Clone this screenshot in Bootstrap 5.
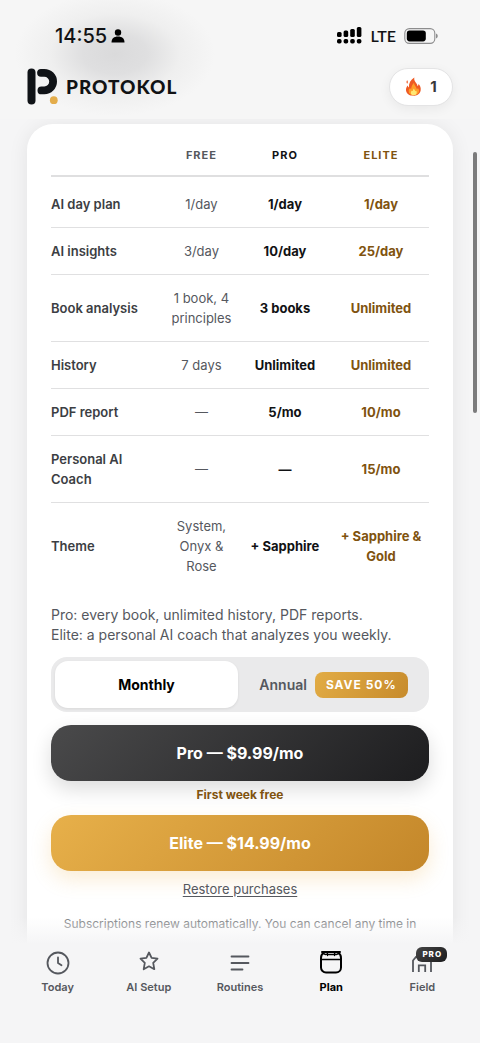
<!DOCTYPE html>
<html lang="en">
<head>
<meta charset="utf-8">
<meta name="viewport" content="width=device-width, initial-scale=1">
<title>Protokol – Plan</title>
<link href="https://cdn.jsdelivr.net/npm/bootstrap@5.3.0/dist/css/bootstrap.min.css" rel="stylesheet">
<style>
:root{--ink:#111214;--dim:#55585e;--gold:#80530f;--page:#f5f5f6}
body{font-family:Inter,"Liberation Sans",sans-serif;background:var(--page);color:var(--ink);font-size:13px;line-height:20px}
.app-top{background:radial-gradient(ellipse 100px 62px at 115px 54px,#dadadb 0,#dfdfe0 32%,rgba(236,236,236,.7) 65%,rgba(245,245,246,0) 100%),#f6f6f6}
.status{height:64px;padding:7px 42px 0 55px}
.clock{font-size:20px;font-weight:500}
.lte{font-family:Lato,sans-serif;font-size:16px;font-weight:600}
.brandbar{height:55px;padding:0 27px 10px}
.wordmark{font-family:Lato,Inter,sans-serif;font-weight:900;font-size:19px;letter-spacing:1px}
.streak{background:#fff;border:1px solid #e4e4e5;height:38px;width:64px;font-size:15px;font-weight:700;color:#37383b;box-shadow:0 3px 12px rgba(0,0,0,.06)}
.scroller{padding:5px 27px 0}
.sheet{background:#fff;border-radius:26px;padding:21px 24px 160px;box-shadow:0 2px 20px rgba(0,0,0,.08)}
.plans{table-layout:fixed;border-collapse:collapse}
.plans th,.plans td{padding:13px 5px;text-align:center;vertical-align:middle;border-bottom:1px solid #e0e0e1}
.plans tbody th{padding-left:0;text-align:left;font-weight:600;color:#3c3e43}
.plans thead>tr>*{padding:0 0 10px;border-bottom:2px solid #dfdfe0;font-size:11px;font-weight:700;letter-spacing:1px}
.plans tbody tr:first-child>*{padding-top:17px}
.plans tbody tr:last-child>*{border-bottom:0}
.plans .c-free{color:var(--dim)}
.plans td.c-pro,.plans td.c-elite{font-weight:700}
.c-elite,.trial{color:var(--gold)}
.col-name{width:30.4%}.col-free{width:18.8%}.col-paid{width:25.4%}
.pitch{font-size:14px;color:var(--dim);margin:16px 0 12px}
.switcher{background:#eaeaeb;border-radius:16px;padding:4px;margin-bottom:13px}
.switcher label{height:47px;border-radius:13px;font-size:14px;font-weight:600;color:var(--dim);cursor:pointer}
.switcher .btn-check:checked+label{background:#fff;color:#000;font-weight:700;box-shadow:0 1px 3px rgba(0,0,0,.08)}
.save{background:linear-gradient(120deg,#e2ac45,#c78b2c);color:#fff;border-radius:8px;font-size:12px;font-weight:700;letter-spacing:1px;line-height:26px;padding:0 11px}
.buy{height:56px;border:0;border-radius:20px;color:#fff;font-size:16px;font-weight:700}
.buy-pro{background:linear-gradient(135deg,#4a4a4b,#1d1d1f);box-shadow:0 8px 20px rgba(0,0,0,.14)}
.buy-elite{background:linear-gradient(135deg,#e7b04a,#c4872a);box-shadow:0 8px 20px rgba(230,170,60,.22)}
.trial{font-size:12px;font-weight:700;line-height:28px;padding-bottom:6px}
.restore{color:var(--dim);text-underline-offset:2px}
.restore:hover{color:#000}
.terms{color:#7b7d81;font-size:12px;margin-top:15px}
.tabs{background:linear-gradient(rgba(245,245,246,0),var(--page) 27px);padding:34px 12px 48px}
.tabs a{color:var(--dim);font-size:11px;font-weight:600;line-height:16px}
.tabs a.active{color:#000;font-weight:700}
.tabs svg{margin-bottom:4px}
.tab-pill{left:calc(50% - 6px);top:-4px;background:linear-gradient(135deg,#444,#1c1c1e);color:#fff;font-size:8px;font-weight:800;letter-spacing:1px;line-height:15px;padding:0 5px 0 6px;border-radius:6px}
.thumb{right:3px;top:152px;width:4px;height:25vh;background:#7b7b7c;border-radius:2px}
</style>
</head>
<body>
<div class="vh-100 d-flex flex-column overflow-hidden position-relative">
  <header class="app-top flex-shrink-0">
    <div class="status d-flex align-items-center justify-content-between">
      <div class="d-flex align-items-center gap-1">
        <span class="clock">14:55</span>
        <svg width="14" height="14" viewBox="0 0 14 14" aria-hidden="true"><circle cx="7" cy="3.5" r="3.2"/><path d="M.5 13.6c0-4 2.5-6 6.500-6s6.500 2 6.500 6z"/></svg>
      </div>
      <div class="d-flex align-items-center gap-2">
        <svg width="25" height="17" viewBox="0 0 25 17" aria-hidden="true"><g><rect x="0" y="5" width="4.600" height="5" rx="1.500"/><rect x="6.600" y="3.500" width="4.600" height="6.500" rx="1.500"/><rect x="13.200" y="2" width="4.600" height="8" rx="1.500"/><rect x="19.800" y="0" width="4.600" height="10" rx="1.500"/><rect x="0" y="12" width="4.600" height="4.500" rx="1.800"/><rect x="6.600" y="12" width="4.600" height="4.500" rx="1.800"/><rect x="13.200" y="12" width="4.600" height="4.500" rx="1.800"/><rect x="19.800" y="12" width="4.600" height="4.500" rx="1.800"/></g></svg>
        <span class="lte">LTE</span>
        <svg width="34" height="16" viewBox="0 0 34 16" aria-hidden="true"><rect x=".8" y=".6" width="30" height="14.800" rx="4.600" fill="none" stroke="#8d8d8e" stroke-width="1.100"/><rect x="2.800" y="2.600" width="19" height="10.800" rx="2.800"/><path d="M32 5.500q1.800.6 1.800 2.500T32 10.500z" fill="#8d8d8e"/></svg>
      </div>
    </div>
    <div class="brandbar d-flex align-items-center justify-content-between">
      <div class="d-flex align-items-center gap-2">
        <svg width="31" height="37" viewBox="0 0 31 37" aria-hidden="true"><g fill="none" stroke="#101317" stroke-linecap="round"><path d="M4.500 4.500v28" stroke-width="8"/><path d="M14 4.800h3.300a8.800 8.800 0 0 1 0 17.600H14.400" stroke-width="7.800"/></g><circle cx="26.800" cy="32.200" r="3.900" fill="#e4ad4b"/></svg>
        <span class="wordmark">PROTOKOL</span>
      </div>
      <button type="button" class="streak rounded-pill p-0 d-flex align-items-center justify-content-center gap-2" aria-label="Streak: 1">
        <svg width="17" height="19" viewBox="0 0 17 19" aria-hidden="true"><path d="M7.200 18.600C2.800 18.200.8 15.500 1 12.200c.1-1.700.9-2.800 1.700-3.800.2 1 .6 1.600 1.200 2C3.700 6.500 5.500 2.800 9.300.5c-.5 2.500.8 4 2 5.700.7 1 1.200 2 1.300 3.100.6-.6.900-1.300.9-2.300 1.700 1.700 2.500 3.700 2.200 6-.4 3.300-2.900 5.700-6.500 5.700z" fill="#ee5a24"/><path d="M2.100 3.200c1 1.100 1 2.200.2 3.500C1.200 5.600 1.300 4.400 2.100 3.200z" fill="#ee5a24"/><path d="M8 18.300c-2.900-.2-4.500-2-4.300-4.500.1-1.300.8-2.100 1.500-2.700.2.700.5 1 .9 1.200.2-2.500 1.100-4.800 2.900-6.500 0 2.600 2.400 3.700 2.900 6.500.5-.3.800-.7 1-1.300 1 1.200 1.400 2.300 1 3.800-.5 2.200-2.400 3.500-5.900 3.500z" fill="#ff9d28"/><path d="M8.500 18.300c-1.700-.1-2.700-1.200-2.600-2.600 0-1 .6-1.600 1.100-2.100.3.400.5.500.8.500.1-1 .5-1.900 1.200-2.500.2 1.300 1.100 1.700 1.400 2.700.4-.1.600-.3.800-.5.500.6.700 1.300.5 2.200-.3 1.400-1.300 2.200-3.200 2.300z" fill="#ffe873"/></svg>
        <span>1</span>
      </button>
    </div>
  </header>

  <main class="scroller flex-grow-1 overflow-hidden">
    <section class="sheet">
      <table class="plans w-100" aria-label="Plan comparison">
        <colgroup><col class="col-name"><col class="col-free"><col class="col-paid"><col class="col-paid"></colgroup>
        <thead><tr><td></td><th scope="col" class="c-free">FREE</th><th scope="col">PRO</th><th scope="col" class="c-elite">ELITE</th></tr></thead>
        <tbody>
          <tr><th scope="row">AI day plan</th><td class="c-free">1/day</td><td class="c-pro">1/day</td><td class="c-elite">1/day</td></tr>
          <tr><th scope="row">AI insights</th><td class="c-free">3/day</td><td class="c-pro">10/day</td><td class="c-elite">25/day</td></tr>
          <tr><th scope="row">Book analysis</th><td class="c-free">1 book, 4 principles</td><td class="c-pro">3 books</td><td class="c-elite">Unlimited</td></tr>
          <tr><th scope="row">History</th><td class="c-free">7 days</td><td class="c-pro">Unlimited</td><td class="c-elite">Unlimited</td></tr>
          <tr><th scope="row">PDF report</th><td class="c-free">—</td><td class="c-pro">5/mo</td><td class="c-elite">10/mo</td></tr>
          <tr><th scope="row">Personal AI Coach</th><td class="c-free">—</td><td class="c-pro">—</td><td class="c-elite">15/mo</td></tr>
          <tr><th scope="row">Theme</th><td class="c-free">System, Onyx &amp; Rose</td><td class="c-pro">+ Sapphire</td><td class="c-elite">+ Sapphire &amp; Gold</td></tr>
        </tbody>
      </table>

      <p class="pitch">Pro: every book, unlimited history, PDF reports.<br>Elite: a personal AI coach that analyzes you weekly.</p>

      <div class="switcher d-flex gap-1" role="radiogroup" aria-label="Billing period">
        <input class="btn-check" type="radio" name="period" id="monthly" checked>
        <label class="w-50 d-flex align-items-center justify-content-center" for="monthly">Monthly</label>
        <input class="btn-check" type="radio" name="period" id="annual">
        <label class="w-50 d-flex align-items-center justify-content-center gap-2" for="annual">Annual <span class="save">SAVE 50%</span></label>
      </div>

      <button type="button" class="buy buy-pro w-100 d-block">Pro — $9.99/mo</button>
      <div class="trial text-center">First week free</div>
      <button type="button" class="buy buy-elite w-100 d-block">Elite — $14.99/mo</button>
      <div class="text-center pt-2"><a href="#" class="restore">Restore purchases</a></div>
      <p class="terms text-center mb-0">Subscriptions renew automatically. You can cancel any time in</p>
    </section>
  </main>

  <nav class="tabs position-absolute bottom-0 start-0 w-100 d-flex" aria-label="Main">
    <a href="#" class="col text-center text-decoration-none">
      <svg class="d-block mx-auto" width="24" height="24" viewBox="0 0 24 24" fill="none" stroke="currentColor" stroke-width="1.800" stroke-linecap="round" stroke-linejoin="round"><circle cx="12" cy="12" r="10.500"/><path d="M12 6.500V12l3.500 2.300"/></svg>Today</a>
    <a href="#" class="col text-center text-decoration-none">
      <svg class="d-block mx-auto" width="24" height="24" viewBox="0 0 24 24" fill="none" stroke="currentColor" stroke-width="1.800" stroke-linejoin="round"><path d="m12 1.500 2.600 5.400 5.900.8-4.300 4.100 1.100 6.400-5.300-2.900-5.300 2.900 1.100-6.400-4.300-4.100 5.900-.8z"/></svg>AI Setup</a>
    <a href="#" class="col text-center text-decoration-none">
      <svg class="d-block mx-auto" width="24" height="24" viewBox="0 0 24 24" fill="none" stroke="currentColor" stroke-width="1.800" stroke-linecap="round"><path d="M3.500 5.500h17M3.500 12h17M3.500 18.500h11"/></svg>Routines</a>
    <a href="#" class="col text-center text-decoration-none active" aria-current="page">
      <svg class="d-block mx-auto" width="24" height="24" viewBox="0 0 24 24" fill="none" stroke="currentColor" stroke-width="2" stroke-linecap="round" stroke-linejoin="round"><path d="M4.500 2.200C2.800 3.200 2 4.800 2 7v9.500a5 5 0 0 0 5 5h10a5 5 0 0 0 5-5V7c0-2.200-.8-3.800-2.500-4.800"/><path d="M2.500 8.500h19" stroke-width="1.500"/><path d="M3.300 1h17.400" stroke-width="2.400"/><path d="M5 2.800q1.700 1.600 3.500 0M8.500 2.500v2M8.500 3.600h7M15.500 2.500v2M15.500 2.800q1.700 1.600 3.500 0" stroke-width="1.300"/></svg>Plan</a>
    <a href="#" class="col text-center text-decoration-none position-relative">
      <svg class="d-block mx-auto" width="24" height="24" viewBox="0 0 24 24" fill="none" stroke="currentColor" stroke-width="1.800"><path d="M3 21V9.500L6 6h12l3 3.500V21"/><path d="M8.800 21v-6.700h6.400V21"/></svg>Field
      <span class="tab-pill position-absolute">PRO</span></a>
  </nav>
  <div class="thumb position-absolute" aria-hidden="true"></div>
</div>
<script src="https://cdn.jsdelivr.net/npm/bootstrap@5.3.0/dist/js/bootstrap.bundle.min.js"></script>
</body>
</html>
